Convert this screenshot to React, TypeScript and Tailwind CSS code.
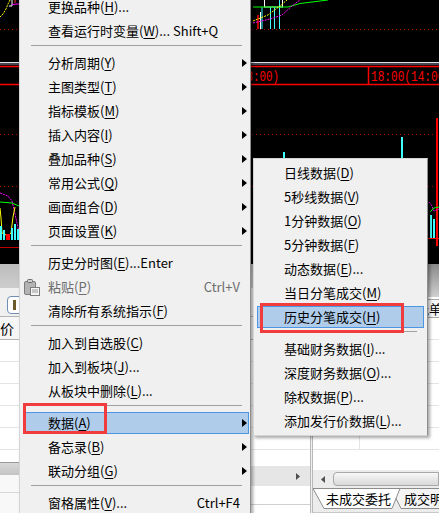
import clsx from 'clsx'

type Entry = {
  label?: string
  hot?: string
  tail?: string
  keys?: string
  sub?: boolean
  off?: boolean
  on?: boolean
  icon?: boolean
}

const SEP: Entry = {}

const mainMenu: Entry[] = [
  { label: '更换品种', hot: 'H', tail: '...' },
  { label: '查看运行时变量', hot: 'W', tail: '... Shift+Q' },
  SEP,
  { label: '分析周期', hot: 'Y', sub: true },
  { label: '主图类型', hot: 'T', sub: true },
  { label: '指标模板', hot: 'M', sub: true },
  { label: '插入内容', hot: 'I', sub: true },
  { label: '叠加品种', hot: 'S', sub: true },
  { label: '常用公式', hot: 'Q', sub: true },
  { label: '画面组合', hot: 'D', sub: true },
  { label: '页面设置', hot: 'K', sub: true },
  SEP,
  { label: '历史分时图', hot: 'E', tail: '...Enter' },
  { label: '粘贴', hot: 'P', keys: 'Ctrl+V', off: true, icon: true },
  { label: '清除所有系统指示', hot: 'F' },
  SEP,
  { label: '加入到自选股', hot: 'C' },
  { label: '加入到板块', hot: 'J', tail: '...' },
  { label: '从板块中删除', hot: 'L', tail: '...' },
  SEP,
  { label: '数据', hot: 'A', sub: true, on: true },
  { label: '备忘录', hot: 'B', sub: true },
  { label: '联动分组', hot: 'G', sub: true },
  SEP,
  { label: '窗格属性', hot: 'V', tail: '...', keys: 'Ctrl+F4' },
]

const dataMenu: Entry[] = [
  { label: '日线数据', hot: 'D' },
  { label: '5秒线数据', hot: 'V' },
  { label: '1分钟数据', hot: 'O' },
  { label: '5分钟数据', hot: 'F' },
  { label: '动态数据', hot: 'E', tail: '...' },
  { label: '当日分笔成交', hot: 'M' },
  { label: '历史分笔成交', hot: 'H', on: true },
  SEP,
  { label: '基础财务数据', hot: 'I', tail: '...' },
  { label: '深度财务数据', hot: 'O', tail: '...' },
  { label: '除权数据', hot: 'P', tail: '...' },
  { label: '添加发行价数据', hot: 'L', tail: '...' },
]

const PasteIcon = () => (
  <svg width="16" height="17" viewBox="0 0 16 17">
    <rect x="0.5" y="2.5" width="11" height="13" rx="1.5" fill="#b4b4b4" stroke="#7c7c7c" />
    <rect x="3.5" y="0.5" width="5" height="3" rx="1" fill="#d0d0d0" stroke="#6a6a6a" />
    <rect x="6.5" y="8.5" width="9" height="8" fill="#f4f4f4" stroke="#7c7c7c" />
    <line x1="8" y1="11" x2="14" y2="11" stroke="#9a9a9a" />
    <line x1="8" y1="13" x2="14" y2="13" stroke="#9a9a9a" />
  </svg>
)

const Arrow = () => (
  <svg width="5" height="8" viewBox="0 0 5 8" className="shrink-0">
    <polygon points="0,0 5,4 0,8" fill="#000" />
  </svg>
)

const MenuRow = ({ entry, slot, rowClass }: { entry: Entry; slot: string; rowClass: string }) => (
  <div className={clsx('h-[24px] py-px', rowClass)}>
    <div
      className={clsx(
        'flex h-[22px] items-center border pr-px text-[13px] leading-[22px]',
        entry.on ? 'border-[#4c95e2] bg-[#afcdeb]' : 'border-transparent',
        entry.off ? 'text-[#6d6d6d]' : 'text-black'
      )}
    >
      <span className={clsx('flex h-full shrink-0 items-center', slot)}>
        {entry.icon && <PasteIcon />}
      </span>
      <span className="flex-1 whitespace-nowrap">
        {entry.label}(<span className="underline decoration-1 underline-offset-2">{entry.hot}</span>)
        {entry.tail}
      </span>
      {entry.keys && <span className="whitespace-nowrap">{entry.keys}</span>}
      {entry.sub ? <Arrow /> : <span className="w-[7px] shrink-0" />}
    </div>
  </div>
)

const Sep = ({ inset }: { inset: string }) => (
  <div className={clsx('h-[8px] pt-[2px]', inset)}>
    <div className="h-px bg-[#a0a0a0]" />
  </div>
)

const Chart = () => (
  <svg width="439" height="264" viewBox="0 0 439 264" className="block shrink-0">
    <rect width="439" height="264" fill="#000" />
    {/* left strip, top */}
    <polyline points="0,17 3,14 6,9 8,4 10,0" fill="none" stroke="#ffff00" strokeDasharray="2 1" />
    <polyline points="9,6 12,6 12,0" fill="none" stroke="#ffffff" />
    <line x1="12" y1="4.5" x2="19" y2="4" stroke="#ff00ff" />
    <line x1="15" y1="0" x2="15" y2="3" stroke="#ff3030" />
    {/* right top candles */}
    <rect x="264.5" y="-2" width="18" height="9" fill="none" stroke="#ffffff" />
    <line x1="258" y1="15" x2="258" y2="29" stroke="#ff0000" strokeWidth="1.5" />
    <line x1="260.5" y1="12" x2="260.5" y2="29" stroke="#ffffff" />
    <line x1="262" y1="7" x2="262" y2="29" stroke="#40ffff" />
    <line x1="270.5" y1="7" x2="270.5" y2="29" stroke="#40ffff" />
    <line x1="274.5" y1="7" x2="274.5" y2="29" stroke="#40ffff" />
    <line x1="279.5" y1="0" x2="279.5" y2="29" stroke="#40ffff" />
    <polyline points="253,7 288,7 300,3.5 328,0" fill="none" stroke="#00ff00" />
    <polyline points="253,21 268,15 280,6 287,0" fill="none" stroke="#ffff00" strokeDasharray="2 1" />
    <polyline points="253,23 270,19 282,15 292,6 300,0" fill="none" stroke="#ff00ff" strokeDasharray="2 1" />
    {/* grid and time axis */}
    <line x1="0" y1="29.5" x2="439" y2="29.5" stroke="#b00000" strokeDasharray="1 3" />
    <line x1="0" y1="62.5" x2="439" y2="62.5" stroke="#e0e0e0" />
    <line x1="0" y1="64" x2="439" y2="64" stroke="#8890a8" />
    <line x1="0" y1="66.5" x2="439" y2="66.5" stroke="#ff0000" strokeWidth="1.5" />
    <line x1="0" y1="84.5" x2="439" y2="84.5" stroke="#ff0000" strokeWidth="1.5" />
    <line x1="368.5" y1="66" x2="368.5" y2="85" stroke="#ff0000" strokeWidth="1.5" />
    <text
      x="201"
      y="80.5"
      fill="#ff0000"
      fontSize="15"
      fontFamily="'Liberation Mono', monospace"
      textLength="78"
      lengthAdjust="spacingAndGlyphs"
    >
      15:00(13:00)
    </text>
    <text
      x="371"
      y="80.5"
      fill="#ff0000"
      fontSize="15"
      fontFamily="'Liberation Mono', monospace"
      textLength="80"
      lengthAdjust="spacingAndGlyphs"
    >
      18:00(14:00)
    </text>
    <line x1="0" y1="134.5" x2="439" y2="134.5" stroke="#b00000" strokeDasharray="1 3" />
    <line x1="0" y1="186.5" x2="439" y2="186.5" stroke="#b00000" strokeDasharray="1 3" />
    {/* volume bars */}
    <rect x="283" y="152" width="2" height="88" fill="#40ffff" />
    <rect x="401" y="137" width="2" height="103" fill="#40ffff" />
    <rect x="436" y="118" width="2" height="128" fill="#ff0000" />
    {/* right strip lower */}
    <polyline points="429,202 432,206 434,211 439,209" fill="none" stroke="#ff00ff" strokeDasharray="2 1" />
    <polyline points="430,212 434,208 439,207" fill="none" stroke="#00ff00" />
    <rect x="430" y="215" width="2" height="23" fill="#40ffff" />
    <rect x="433" y="219" width="2" height="19" fill="#40ffff" />
    <line x1="427" y1="238.5" x2="439" y2="238.5" stroke="#ff0000" />
    {/* left strip lower */}
    <polyline points="0,193 8,196 12,201 15,214 19,232" fill="none" stroke="#ff00ff" strokeDasharray="2 1" />
    <polyline points="0,202 12,203 19,206" fill="none" stroke="#00ff00" />
    <polyline points="0,208 1,218 2,233 8,236 11,233 13,217 15,207" fill="none" stroke="#ffff00" />
    <rect x="0" y="226" width="2" height="14" fill="#40ffff" />
    <rect x="3" y="230" width="2" height="10" fill="#40ffff" />
    <rect x="11" y="228" width="2" height="12" fill="#40ffff" />
    <rect x="14" y="224" width="2" height="16" fill="#40ffff" />
    <rect x="17" y="229" width="2" height="11" fill="#40ffff" />
    <rect x="6" y="234" width="4" height="6" fill="#ff0000" />
    <line x1="0" y1="247.5" x2="19" y2="247.5" stroke="#c00000" />
  </svg>
)

const GridRows = ({ count, first }: { count: number; first?: string }) => (
  <div className="flex flex-col bg-white">
    {Array.from({ length: count }).map((_, i) => (
      <div key={`row-${i}`} className="flex h-[22px] border-b border-[#e4e4e4]">
        <div className={clsx('h-full border-r border-[#e4e4e4]', first)} />
      </div>
    ))}
  </div>
)

const Tabs = () => (
  <div className="relative h-[25px] overflow-hidden bg-[#ececec] text-[13px] leading-[20px] text-black">
    <svg width="126" height="25" viewBox="0 0 126 25" className="absolute inset-0">
      <line x1="0" y1="0.5" x2="126" y2="0.5" stroke="#8c8c8c" />
      <polygon points="78,0.5 88,20.5 130,20.5 130,0.5" fill="#f4f4f4" stroke="#8c8c8c" />
      <polygon points="0,0.5 11,20.5 79,20.5 87,0.5" fill="#ffffff" stroke="#8c8c8c" />
      <line x1="0" y1="24.5" x2="126" y2="24.5" stroke="#c8c8c8" />
    </svg>
    <div className="relative flex pt-px">
      <span className="ml-[13px] shrink-0 whitespace-nowrap">未成交委托</span>
      <span className="ml-[13px] shrink-0 whitespace-nowrap">成交明细</span>
    </div>
  </div>
)

const LowerPanes = () => (
  <div className="flex flex-1">
    {/* quote list pane */}
    <div className="flex w-[150px] shrink-0 flex-col">
      <div className="h-[24px] bg-gradient-to-b from-[#bdbdbd] to-[#cdcdcd]" />
      <div className="h-[28px] bg-[#f0f0f0] pl-[7px] pt-[8px]">
        <div className="flex h-[18px] w-[30px] items-center rounded-[4px] border border-[#6e8fb5] bg-white pl-[5px]">
          <span className="h-[10px] w-[3px] bg-[#6b5a2a]" />
        </div>
      </div>
      <div className="flex h-[24px] items-center border-y border-[#b4b4b4] bg-[#f6f6f6] text-[14px] text-black">
        <span>价</span>
      </div>
      <GridRows count={5} first="w-[60px]" />
      <div className="h-[12px] bg-white" />
      <div className="h-[13px] border-t border-[#9a9a9a] bg-gradient-to-b from-[#d8d8d8] to-[#c4c4c4]" />
      <div className="flex-1 bg-[#f8f8f8] pt-[17px]">
        <div className="h-px bg-[#d8d8d8]" />
      </div>
    </div>
    <div className="flex w-[163px] shrink-0 flex-col border-r-[3px] border-double border-[#b8b8b8]">
      <div className="h-[24px] bg-gradient-to-b from-[#bdbdbd] to-[#cdcdcd]" />
      <div className="h-[28px] bg-[#f0f0f0]" />
      <div className="h-[24px] border-y border-[#b4b4b4] bg-[#f6f6f6]" />
      <GridRows count={5} first="w-[60px]" />
      <div className="h-[16px] bg-white" />
      <div className="flex h-[20px] items-center justify-end bg-[#e6e6e6] pr-[10px]">
        <svg width="4" height="7" viewBox="0 0 4 7">
          <polygon points="0,0 4,3.5 0,7" fill="#505050" />
        </svg>
      </div>
      <div className="flex-1 bg-white pt-[18px]">
        <div className="h-px bg-[#d0d0d0]" />
      </div>
    </div>
    {/* orders pane */}
    <div className="flex min-w-0 flex-1 flex-col">
      <div className="h-[33px] bg-gradient-to-b from-[#8a8a8a] to-[#d0d0d0]" />
      <div className="h-[2px] bg-white" />
      <div className="flex h-[19px] items-center justify-end overflow-hidden border-y border-[#a8a8a8] bg-[#f6f6f6] text-[13px] text-black">
        <span className="mr-[-3px] shrink-0 whitespace-nowrap">委托单</span>
      </div>
      <GridRows count={6} first="w-[47px]" />
      <div className="h-[20px] bg-white" />
      <div className="flex h-[18px] items-center bg-[#ececec]">
        <div className="flex w-[20px] justify-center">
          <svg width="4" height="7" viewBox="0 0 4 7">
            <polygon points="4,0 0,3.5 4,7" fill="#505050" />
          </svg>
        </div>
        <div className="h-[14px] flex-1 rounded-l-[4px] border border-[#a8a8a8] bg-gradient-to-b from-[#f8f8f8] to-[#d8d8d8]" />
      </div>
      <Tabs />
    </div>
  </div>
)

const App = () => {
  return (
    <div className="relative h-[513px] w-[439px] overflow-hidden bg-[#f0f0f0] font-['Noto_Sans_CJK_SC',sans-serif]">
      <div className="flex h-full flex-col">
        <Chart />
        <LowerPanes />
      </div>

      {/* context menu */}
      <div className="absolute left-[19px] top-[-8px] w-[232px] border border-[#d4d4d4] border-r-[#8e8e8e] bg-[#f0f0f0] py-[2px] shadow-[2px_2px_3px_rgba(0,0,0,0.35)]">
        {mainMenu.map((entry, i) =>
          entry.label ? (
            <MenuRow key={`m-${i}`} entry={entry} slot="w-[24px]" rowClass="ml-[3px] mr-px" />
          ) : (
            <Sep key={`m-${i}`} inset="ml-[11px] mr-[8px]" />
          )
        )}
      </div>

      {/* data submenu */}
      <div className="absolute left-[253px] top-[158px] w-[175px] border border-[#d4d4d4] border-r-[#8e8e8e] bg-[#f0f0f0] py-[2px] shadow-[2px_2px_3px_rgba(0,0,0,0.35)]">
        {dataMenu.map((entry, i) =>
          entry.label ? (
            <MenuRow key={`d-${i}`} entry={entry} slot="w-[26px]" rowClass="mx-[3px]" />
          ) : (
            <Sep key={`d-${i}`} inset="ml-[11px] mr-[10px]" />
          )
        )}
      </div>

      {/* annotation boxes */}
      <div className="absolute left-[23px] top-[403px] h-[31px] w-[84px] border-[3px] border-[#f03c3c]" />
      <div className="absolute left-[260px] top-[303px] h-[30px] w-[144px] border-[3px] border-[#f03c3c]" />
    </div>
  )
}

export default App
